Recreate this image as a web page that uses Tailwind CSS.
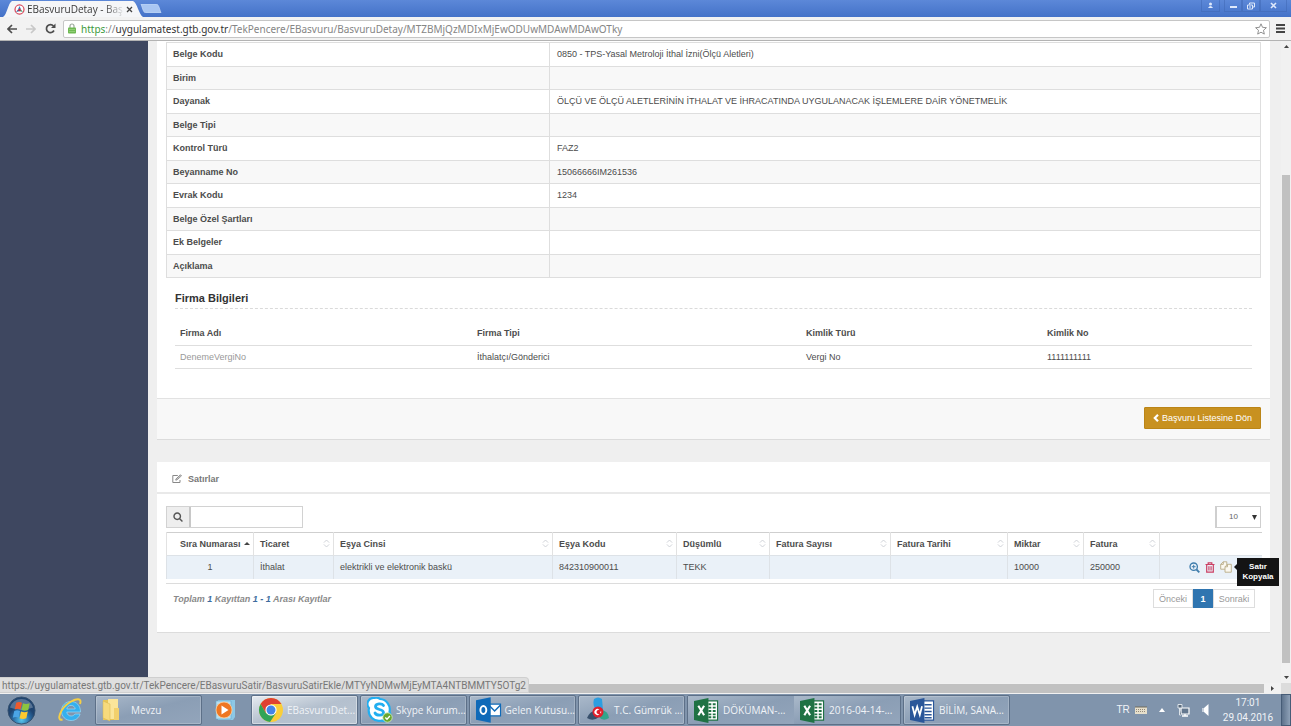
<!DOCTYPE html>
<html lang="tr">
<head>
<meta charset="utf-8">
<title>EBasvuruDetay - Başvuru</title>
<script src="https://cdn.jsdelivr.net/npm/@tailwindcss/browser@4"></script>
</head>
<body class="flex h-screen flex-col overflow-hidden bg-[#efefef] font-['Liberation_Sans',Arial,sans-serif] text-[9px] leading-3 text-[#4c4c4c]">

<svg class="hidden">
  <defs>
    <symbol id="sort" viewBox="0 0 8 10"><path d="M1 4 4 1l3 3M1 6l3 3 3-3" fill="none" stroke="#c9cdd2" stroke-width="1"/></symbol>
    <symbol id="excel" viewBox="0 0 26 26"><path d="M13 3h11.500v20H13z" fill="#fff" stroke="#1f7244" stroke-width="1.200"/><path d="M15 6.500h3M19.500 6.500h3M15 10h3M19.500 10h3M15 13.500h3M19.500 13.500h3M15 17h3M19.500 17h3M15 20h3M19.500 20h3" stroke="#1f7244" stroke-width="2"/><path d="M0 3 15 0v26L0 23z" fill="#1f7244"/><path d="m4.500 8 6 10M10.500 8l-6 10" stroke="#fff" stroke-width="2.200"/></symbol>
  </defs>
</svg>

<!-- Title bar -->
<header class="flex h-[17px] shrink-0 items-end bg-linear-to-b from-[#5c88d8] to-[#4472c8]">
  <div class="relative flex h-4 w-[144px] items-center pl-3.5">
    <svg class="absolute inset-0 h-full w-full" viewBox="0 0 144 16" preserveAspectRatio="none"><path d="M3 16C7 14 8 2 12 0h121c4 1 6 14 10 16z" fill="#f5f6f8"/></svg>
    <svg class="relative size-[11px] shrink-0" viewBox="0 0 22 22"><circle cx="11" cy="11" r="9" fill="#fff" stroke="#d9485a" stroke-width="2.500"/><path d="M11 4 8 11h6z" fill="#2f7fc1"/><path d="m4 16 4-5 4 3z" fill="#2b5b9b"/><path d="m18 16-4-5-4 3z" fill="#3f9c74"/><circle cx="11" cy="12" r="2.500" fill="#d8233a"/></svg>
    <span class="relative ml-0.5 bg-linear-to-r from-[#333] from-80% to-[#e4e6e8] bg-clip-text font-['Open_Sans',sans-serif] text-[10px] leading-4 whitespace-nowrap text-transparent">EBasvuruDetay - Baş</span>
    <button class="relative mr-[11px] ml-auto" aria-label="Sekmeyi kapat"><svg class="size-[7px]" viewBox="0 0 7 7"><path d="m1 1 5 5M6 1 1 6" stroke="#444" stroke-width="1.300"/></svg></button>
  </div>
  <button class="mb-1 -ml-1" aria-label="Yeni sekme"><svg class="h-[9px] w-[22px]" viewBox="0 0 22 9"><path d="M1 0h15q2 0 3 3l2 6H6Q4 9 3 6z" fill="#a9c6f2" stroke="#cfe0fa" stroke-width=".6"/></svg></button>
  <div class="ml-auto flex h-3 self-start text-[#dfe9fb]">
    <button class="flex w-[19px] items-center justify-center border border-t-0 border-[#3d66b2]/50" aria-label="Kullanıcı"><svg class="size-[7px]" viewBox="0 0 7 7" fill="currentColor"><circle cx="3.500" cy="2" r="1.500"/><path d="M1 6q2.500-4 5 0z"/></svg></button>
    <button class="ml-1 flex w-[18px] items-center justify-center border border-t-0 border-[#3d66b2]/50" aria-label="Küçült"><svg class="size-[7px]" viewBox="0 0 7 7"><path d="M0 5h7" stroke="currentColor" stroke-width="2"/></svg></button>
    <button class="flex w-[18px] items-center justify-center border border-t-0 border-[#3d66b2]/50" aria-label="Geri yükle"><svg class="size-2" viewBox="0 0 8 8"><path d="M2.500 2.500V1h5v4H6M.5 3h5v4h-5zM2 5h2" fill="none" stroke="currentColor"/></svg></button>
    <button class="mr-1 flex w-[27px] items-center justify-center border border-t-0 border-[#3d66b2]/50" aria-label="Kapat"><svg class="size-[7px]" viewBox="0 0 7 7"><path d="m1 1 5 5M6 1 1 6" stroke="currentColor" stroke-width="1.600"/></svg></button>
  </div>
</header>

<!-- Address bar -->
<nav class="flex h-6 shrink-0 items-center border-b border-[#b3b3b3] bg-[#f2f2f2] pr-1.5 pl-[7px] text-[#555]">
  <button aria-label="Geri"><svg class="size-[10px]" viewBox="0 0 10 10"><path d="M10 5H1.500M5 1 1 5l4 4" fill="none" stroke="#4d4d4d" stroke-width="1.700"/></svg></button>
  <button class="ml-[9px]" aria-label="İleri"><svg class="size-[10px]" viewBox="0 0 10 10"><path d="M0 5h8.500M5 1l4 4-4 4" fill="none" stroke="#c8c8c8" stroke-width="1.700"/></svg></button>
  <button class="ml-[9px]" aria-label="Yenile"><svg class="size-[11px]" viewBox="0 0 11 11"><path d="M9 7.500A4 4 0 1 1 8.500 3" fill="none" stroke="#4d4d4d" stroke-width="1.700"/><path d="M10.500.5V5H6z" fill="#4d4d4d"/></svg></button>
  <div class="ml-[7px] flex h-[18px] flex-1 items-center rounded-xs border border-[#c6c6c6] bg-white pr-0.5 pl-1">
    <svg class="h-[11px] w-2" viewBox="0 0 8 11"><path d="M2 5V3a2 2 0 0 1 4 0v2" fill="none" stroke="#9aa79a" stroke-width="1.200"/><rect y="4.500" width="8" height="6" rx=".8" fill="#6fba53"/><path d="M1 6.500h6M1 8.500h6" stroke="#a8dc90" stroke-width=".6"/></svg>
    <div class="ml-[5px] flex-1 font-['Noto_Sans',sans-serif] text-[10px] leading-4 whitespace-nowrap text-[#858585]"><span class="text-[#3c9a3c]">https</span>://<span class="text-[#333]">uygulamatest.gtb.gov.tr</span>/TekPencere/EBasvuru/BasvuruDetay/MTZBMjQzMDIxMjEwODUwMDAwMDAwOTky</div>
    <button aria-label="Yer işareti"><svg class="size-3" viewBox="0 0 12 12"><path d="m6 .8 1.500 3.500 3.900.4-2.900 2.600.8 3.800L6 9.200l-3.300 1.900.8-3.800L.6 4.700l3.900-.4z" fill="#fff" stroke="#777" stroke-width=".8"/></svg></button>
  </div>
  <button class="ml-1.5" aria-label="Menü"><svg class="size-[9px]" viewBox="0 0 9 9"><path d="M0 1h9M0 4.500h9M0 8h9" stroke="#444" stroke-width="1.800"/></svg></button>
</nav>

<!-- Page viewport -->
<div class="relative flex min-h-0 flex-1">
  <aside class="mb-1.5 w-[148px] shrink-0 bg-[#3e4760]"></aside>
  <main class="min-w-0 flex-1 px-[9px] pr-[11px]">
    <section class="border-b border-[#dcdcdc] bg-white">
      <div class="px-[9px] pt-px">
        <table class="h-[236px] w-full table-fixed border-collapse border border-[#dedede] text-left [&_td]:border [&_td]:border-[#dedede] [&_td]:px-[7px] [&_th]:border [&_th]:border-[#dedede] [&_th]:px-1.5 [&_tr:nth-child(even)]:bg-[#f8f8f8]">
          <colgroup><col class="w-[35%]"><col></colgroup>
          <tbody>
            <tr><th>Belge Kodu</th><td>0850 - TPS-Yasal Metroloji İthal İzni(Ölçü Aletleri)</td></tr>
            <tr><th>Birim</th><td></td></tr>
            <tr><th>Dayanak</th><td>ÖLÇÜ VE ÖLÇÜ ALETLERİNİN İTHALAT VE İHRACATINDA UYGULANACAK İŞLEMLERE DAİR YÖNETMELİK</td></tr>
            <tr><th>Belge Tipi</th><td></td></tr>
            <tr><th>Kontrol Türü</th><td>FAZ2</td></tr>
            <tr><th>Beyanname No</th><td>15066666IM261536</td></tr>
            <tr><th>Evrak Kodu</th><td>1234</td></tr>
            <tr><th>Belge Özel Şartları</th><td></td></tr>
            <tr><th>Ek Belgeler</th><td></td></tr>
            <tr><th>Açıklama</th><td></td></tr>
          </tbody>
        </table>
      </div>
      <div class="px-[18px] pt-3.5 pb-[29px]">
        <h2 class="border-b border-dashed border-[#dadada] pb-[3px] text-[11px] leading-[13px] font-bold text-[#333]">Firma Bilgileri</h2>
        <table class="mt-3 w-full table-fixed border-collapse text-left [&_td]:px-[5px] [&_th]:px-[5px] [&_tr]:border-b [&_tr]:border-[#dedede]">
          <colgroup><col class="w-[297px]"><col class="w-[329px]"><col class="w-[241px]"><col class="w-[210px]"></colgroup>
          <thead><tr class="h-6"><th>Firma Adı</th><th>Firma Tipi</th><th>Kimlik Türü</th><th>Kimlik No</th></tr></thead>
          <tbody><tr class="h-[23px]"><td class="text-[#999]">DenemeVergiNo</td><td>İthalatçı/Gönderici</td><td>Vergi No</td><td>1111111111</td></tr></tbody>
        </table>
      </div>
      <footer class="flex h-[41px] items-center justify-end border-t border-[#e2e2e2] bg-[#f8f8f8] pr-[9px] pb-0.5">
        <button class="flex h-[22px] items-center gap-[3px] rounded-[1px] border border-[#bb8517] bg-[#c89120] px-2 text-white"><svg class="h-2 w-1.5" viewBox="0 0 6 8"><path d="M5 .8 1.800 4 5 7.200" fill="none" stroke="#fff" stroke-width="2.200"/></svg>Başvuru Listesine Dön</button>
      </footer>
    </section>

    <section class="mt-[22px] border-b border-[#dcdcdc] bg-white">
      <h2 class="flex h-8 items-center gap-1.5 border-b-2 border-[#e9e9e9] pt-1 pl-[15px] font-bold text-[#777]">
        <svg class="size-[10px]" viewBox="0 0 10 10" fill="none" stroke="#888"><path d="M8 6v2.500H.8V1.500h5"/><path d="M4 5.500 8.500 1M3.800 6.200l.3-1.400 4.400-4 1 1-4.400 4z" stroke-width=".9"/></svg>Satırlar
      </h2>
      <div class="px-[9px] pt-3 pb-6">
        <div class="flex justify-between">
          <label class="flex h-[22px] w-[137px] border border-[#d2d2d2]">
            <span class="flex w-6 shrink-0 items-center justify-center border-r-2 border-[#c8c8c8] bg-[#eee]"><svg class="size-[10px]" viewBox="0 0 9 9" fill="none" stroke="#555" stroke-width="1.300"><circle cx="3.800" cy="3.800" r="2.900"/><path d="m6 6 2.500 2.500"/></svg></span>
            <input type="search" aria-label="Ara" class="min-w-0 flex-1 bg-white px-1 outline-none">
          </label>
          <div class="relative">
            <select aria-label="Sayfa boyutu" class="h-[22px] w-[46px] appearance-none border border-l-2 border-[#cfcfcf] bg-white pl-3 text-[8px] text-[#666]"><option>10</option></select>
            <svg class="pointer-events-none absolute top-[9px] right-1 h-[5px] w-[5px]" viewBox="0 0 5 5"><path d="M0 0h5L2.500 5z" fill="#333"/></svg>
          </div>
        </div>
        <div class="mt-1 border-b border-[#dcdcdc] pb-1">
          <table class="w-full table-fixed border-collapse text-left [&_td]:border-r [&_td]:border-[#dde2e7] [&_td]:px-1.5 [&_td:last-child]:border-r-0 [&_th]:border-r [&_th]:border-[#e2e2e2] [&_th]:px-1.5 [&_th:last-child]:border-r-0">
            <colgroup><col class="w-[87px]"><col class="w-[80px]"><col class="w-[219px]"><col class="w-[124px]"><col class="w-[93px]"><col class="w-[121px]"><col class="w-[117px]"><col class="w-[76px]"><col class="w-[76px]"><col class="w-[102px]"></colgroup>
            <thead>
              <tr class="h-[23px] border-t border-[#cfcfcf] whitespace-nowrap">
                <th class="border-l"><div class="-mr-[3px] flex items-center justify-between pl-[7px]">Sıra Numarası<svg class="h-[3px] w-1.5" viewBox="0 0 6 3"><path d="M0 3h6L3 0z" fill="#444"/></svg></div></th>
                <th><div class="-mr-[3px] flex items-center justify-between">Ticaret<svg class="h-[9px] w-[7px]"><use href="#sort"/></svg></div></th>
                <th><div class="-mr-[3px] flex items-center justify-between">Eşya Cinsi<svg class="h-[9px] w-[7px]"><use href="#sort"/></svg></div></th>
                <th><div class="-mr-[3px] flex items-center justify-between">Eşya Kodu<svg class="h-[9px] w-[7px]"><use href="#sort"/></svg></div></th>
                <th><div class="-mr-[3px] flex items-center justify-between">Düşümlü<svg class="h-[9px] w-[7px]"><use href="#sort"/></svg></div></th>
                <th><div class="-mr-[3px] flex items-center justify-between">Fatura Sayısı<svg class="h-[9px] w-[7px]"><use href="#sort"/></svg></div></th>
                <th><div class="-mr-[3px] flex items-center justify-between">Fatura Tarihi<svg class="h-[9px] w-[7px]"><use href="#sort"/></svg></div></th>
                <th><div class="-mr-[3px] flex items-center justify-between">Miktar<svg class="h-[9px] w-[7px]"><use href="#sort"/></svg></div></th>
                <th><div class="-mr-[3px] flex items-center justify-between">Fatura<svg class="h-[9px] w-[7px]"><use href="#sort"/></svg></div></th>
                <th></th>
              </tr>
            </thead>
            <tbody>
              <tr class="h-6 border-t border-[#dde2e7] bg-[#eaf1f8]">
                <td class="border-l text-center">1</td><td>İthalat</td><td>elektrikli ve elektronik baskü</td><td>842310900011</td><td>TEKK</td><td></td><td></td><td>10000</td><td>250000</td>
                <td>
                  <div class="relative flex items-center gap-[5px] pl-[23px]">
                    <a href="#" aria-label="Görüntüle"><svg class="size-[11px]" viewBox="0 0 11 11" fill="none" stroke="#3f7dac" stroke-width="1.300"><circle cx="4.700" cy="4.700" r="3.700"/><path d="M7.500 7.500 10.300 10.300" stroke-width="1.800"/><path d="M2.800 4.700h3.800M4.700 2.800v3.800" stroke-width="1"/></svg></a>
                    <a href="#" aria-label="Sil"><svg class="h-[11px] w-[10px]" viewBox="0 0 10 11" fill="none" stroke="#cb3f63"><path d="M.5 2.500h9M3.200 2.300V.8h3.600v1.500M1.700 2.500v7.700h6.600V2.500" stroke-width="1.200"/><path d="M3.700 4.200v4.300M5 4.200v4.300M6.300 4.200v4.300" stroke-width=".8"/></svg></a>
                    <a href="#" aria-label="Kopyala"><svg class="size-3" viewBox="0 0 12 12" fill="#fbf8f0" stroke="#b9ab86" stroke-width=".9"><path d="M3.300.8h3.500v7.400H.7V3.400zM3.300.8v2.600H.7"/><path d="M7.500 3.300h3.800v7.900H5V5.800zM7.500 3.300v2.500H5"/></svg></a>
                    <div role="tooltip" class="absolute -top-[3px] left-[71px] w-[42px] bg-[#141414] px-1 py-1 text-center text-[8px] leading-[10px] font-bold text-white"><svg class="absolute top-1.5 -left-[3px] h-1.5 w-[3px]" viewBox="0 0 3 6"><path d="M3 0v6L0 3z" fill="#141414"/></svg>Satır<br>Kopyala</div>
                  </div>
                </td>
              </tr>
            </tbody>
          </table>
        </div>
        <div class="flex items-start justify-between pt-[5px] pr-1.5 pl-[7px]">
          <p class="pt-1 font-bold text-[#8a8a8a] italic">Toplam <span class="text-[#3d6c9e]">1</span> Kayıttan <span class="text-[#3d6c9e]">1 - 1</span> Arası Kayıtlar</p>
          <div class="flex h-[19px] text-[#999]">
            <button class="w-10 border border-[#ddd]">Önceki</button>
            <button class="w-5 bg-[#2f75b0] font-bold text-white">1</button>
            <button class="w-[42px] border border-[#ddd]">Sonraki</button>
          </div>
        </div>
      </div>
    </section>
  </main>

  <!-- Vertical scrollbar -->
  <div class="flex w-[10px] shrink-0 flex-col items-center bg-[#f1f1f1] py-1">
    <svg class="h-[3px] w-[5px]" viewBox="0 0 5 3"><path d="M0 3h5L2.500 0z" fill="#444"/></svg>
    <div class="mt-[127px] mb-[13px] w-2 flex-1 bg-[#c1c1c1]"></div>
    <svg class="h-[3px] w-[5px]" viewBox="0 0 5 3"><path d="M0 0h5L2.500 3z" fill="#444"/></svg>
  </div>

  <div class="absolute -bottom-[10px] left-0 z-10 h-4 rounded-tr-sm border border-l-0 border-[#cfcfcf] bg-[#dfdfdf] px-0.5 font-['Roboto',sans-serif] text-[10px] leading-[15px] whitespace-nowrap text-[#777]">https://uygulamatest.gtb.gov.tr/TekPencere/EBasvuruSatir/BasvuruSatirEkle/MTYyNDMwMjEyMTA4NTBMMTY5OTg2</div>
</div>

<!-- Horizontal scrollbar -->
<div class="flex h-[11px] shrink-0 items-center bg-[#f1f1f1]">
  <div class="ml-4 h-[9px] flex-1 bg-[#c1c1c1]"></div>
  <svg class="mx-[7px] h-[5px] w-[3px]" viewBox="0 0 3 5"><path d="M0 0v5l3-2.500z" fill="#444"/></svg>
  <div class="h-full w-[10px] bg-[#dcdcdc]"></div>
</div>

<!-- Taskbar -->
<footer class="flex h-8 shrink-0 items-center bg-[#8094ac] font-['Open_Sans',sans-serif] text-[10px] whitespace-nowrap text-[#f0f3f7]">
  <button class="ml-[7px]" aria-label="Başlat"><svg class="size-[29px]" viewBox="0 0 30 30"><defs><radialGradient id="orb" cy=".85"><stop stop-color="#58c7ee"/><stop offset=".6" stop-color="#2a6da5"/><stop offset="1" stop-color="#1f4470"/></radialGradient></defs><circle cx="15" cy="15" r="14" fill="url(#orb)" stroke="#35516f"/><path d="M3 12a12.500 12.500 0 0 1 24 0Q15 17 3 12z" fill="#fff" opacity=".25"/><path d="M9.500 7q3-1.500 6 0L14 14q-3-1.500-6 0z" fill="#ee5a2c"/><path d="M16.500 7.500q3 1.500 7 0L22 14.500q-3.500 1.500-7 0z" fill="#8cc43f"/><path d="M7.500 15.500q3-1.500 6 0L12 22.500q-3-1.500-6 0z" fill="#4ba5e6"/><path d="M14.500 16q3.500 1.500 7 0L20 23q-3.500 1.500-7 0z" fill="#fdc92e"/></svg></button>
  <button class="ml-[21px]" aria-label="Internet Explorer"><svg class="size-[26px]" viewBox="0 0 26 26"><path d="M14 4.500c5.500 0 9.500 4 9.500 10.500H9.800c.3 2.800 2.200 4 4.400 4 1.700 0 3-.8 3.600-2h5.300c-1.300 4-4.600 6.500-9 6.500-5.600 0-9.600-4-9.600-9.500s4-9.500 9.500-9.500zM9.800 12h8.400c-.3-2.200-1.900-3.600-4.100-3.600S10.200 9.800 9.800 12z" fill="#35b0ee" stroke="#9adcfb" stroke-width=".7"/><path d="M5.500 22.500C-1 24.500 3 11.500 12.500 5.500 19 1.500 25.500.5 23 7" fill="none" stroke="#f6cf45" stroke-width="2"/></svg></button>
  <button class="ml-3 flex h-[30px] w-[107px] items-center rounded-xs border border-[#5d7088] bg-linear-to-br from-[#aab9ca] via-[#8b9eb5] to-[#93a5bb] pl-1.5 ring-1 ring-white/20 ring-inset"><svg class="h-6 w-[18px]" viewBox="0 0 18 24"><path d="M1 2h9l2 2v18H1z" fill="#e9c657"/><path d="M6 1h10v20H6z" fill="#fae59a"/><path d="m1 3 7 3v17l-7-3z" fill="#f7da7c" stroke="#d7b54c" stroke-width=".5"/><path d="M12 10h5v12h-5z" fill="#f2d06c"/></svg><span class="ml-[11px]">Mevzu</span></button>
  <button class="ml-3" aria-label="Media Player"><svg class="size-[22px]" viewBox="0 0 22 22"><path d="M4 1h17v17l-2 3H4z" fill="#8cc8e6"/><path d="M2 2h15v18H2z" fill="#b6def0" stroke="#67a7cc" stroke-width=".6"/><circle cx="10" cy="11" r="8" fill="#ee7622" stroke="#fbd0a0" stroke-width=".8"/><path d="M7.500 6.500v9l7-4.500z" fill="#fff"/></svg></button>
  <button class="ml-[15px] flex h-[30px] w-[107px] items-center rounded-xs border border-[#5d7088] bg-linear-to-br from-[#e6ebf0] via-[#b4c0ce] to-[#b9c5d2] pl-1.5 ring-1 ring-white/40 ring-inset"><svg class="size-[26px]" viewBox="0 0 26 26"><circle cx="13" cy="13" r="12" fill="#f9ce3a"/><path d="M2.600 7A12 12 0 0 1 23.400 7H13l-5.200 9z" fill="#df4132"/><path d="M2.600 7A12 12 0 0 0 12 25l6-9-5 2.500-5.200-2.500z" fill="#32a456"/><circle cx="13" cy="13" r="5.600" fill="#fff"/><circle cx="13" cy="13" r="4.500" fill="#4384e8"/></svg><span class="ml-[3px]">EBasvuruDet...</span></button>
  <button class="ml-0.5 flex h-[30px] w-[107px] items-center rounded-xs border border-[#5d7088] bg-linear-to-br from-[#aab9ca] via-[#8b9eb5] to-[#93a5bb] pl-1.5 ring-1 ring-white/20 ring-inset"><svg class="size-[26px]" viewBox="0 0 26 26"><path d="M7 1a6 6 0 0 1 6 1 10.500 10.500 0 0 1 9.500 13A6 6 0 0 1 15 23.500 10.500 10.500 0 0 1 2 11 6 6 0 0 1 7 1z" fill="#fff" stroke="#22aef0" stroke-width="2.200"/><path d="M16.500 8.500C15 6 8.500 6.300 8.500 9.500c0 4 8 2 8 6 0 3.500-7 3.500-8.500.5" fill="none" stroke="#22aef0" stroke-width="2.800" stroke-linecap="round"/><circle cx="20.500" cy="20.500" r="4.700" fill="#69a72d" stroke="#d8efc0" stroke-width=".8"/><path d="m18.300 20.500 1.700 1.800 2.900-3.300" fill="none" stroke="#fff" stroke-width="1.300"/></svg><span class="ml-[3px]">Skype Kurum...</span></button>
  <button class="ml-0.5 flex h-[30px] w-[107px] items-center rounded-xs border border-[#5d7088] bg-linear-to-br from-[#aab9ca] via-[#8b9eb5] to-[#93a5bb] pl-1.5 ring-1 ring-white/20 ring-inset"><svg class="size-[26px]" viewBox="0 0 26 26"><path d="M13 7h12v12H13z" fill="#fff" stroke="#0f6ab8" stroke-width="1.200"/><path d="m13 8 6 6 6-6" fill="none" stroke="#0f6ab8" stroke-width="1.500"/><path d="M0 3 15 0v26L0 23z" fill="#0f6ab8"/><ellipse cx="7.500" cy="13" rx="3" ry="4" fill="none" stroke="#fff" stroke-width="2"/></svg><span class="ml-[3px]">Gelen Kutusu...</span></button>
  <button class="ml-0.5 flex h-[30px] w-[107px] items-center rounded-xs border border-[#5d7088] bg-linear-to-br from-[#aab9ca] via-[#8b9eb5] to-[#93a5bb] pl-1.5 ring-1 ring-white/20 ring-inset"><svg class="size-[26px]" viewBox="0 0 26 26"><path d="M9 2q4-3 8 0l1 11-6 1q-5-5-3-12z" fill="#2d9ee0"/><path d="M2 21q3-7 8-7l4 6q-6 5-12 1z" fill="#38506c"/><path d="M24 21q-1-7-7-8l-3 7q4 5 10 1z" fill="#32a58c"/><circle cx="13" cy="15" r="5.500" fill="#e2202c"/><path d="M14.500 12.800a3 3 0 1 0 0 4.400 2.300 2.300 0 1 1 0-4.400z" fill="#fff"/><path d="m15.200 14 .5.800h1l-.7.700.3 1-1-.5z" fill="#fff"/></svg><span class="ml-[3px]">T.C. Gümrük ...</span></button>
  <div class="ml-0.5 flex h-[30px] w-[214px] rounded-xs border border-[#5d7088] ring-1 ring-white/20 ring-inset">
    <button class="flex flex-1 items-center bg-linear-to-br from-[#aab9ca] via-[#8b9eb5] to-[#93a5bb] pl-1.5"><svg class="size-[25px]"><use href="#excel"/></svg><span class="ml-1">DÖKÜMAN-...</span></button>
    <button class="flex flex-1 items-center bg-linear-to-br from-[#aab9ca] via-[#8b9eb5] to-[#93a5bb] pl-1.5"><svg class="size-[25px]"><use href="#excel"/></svg><span class="ml-1">2016-04-14-...</span></button>
  </div>
  <button class="ml-0.5 flex h-[30px] w-[107px] items-center rounded-xs border border-[#5d7088] bg-linear-to-br from-[#aab9ca] via-[#8b9eb5] to-[#93a5bb] pl-1.5 ring-1 ring-white/20 ring-inset"><svg class="size-[25px]" viewBox="0 0 26 26"><path d="M13 3h11.500v20H13z" fill="#fff" stroke="#2a5699" stroke-width="1.200"/><path d="M15 7h7.500M15 10.500h7.500M15 14h7.500M15 17.500h7.500M15 20.500h7.500" stroke="#2a5699" stroke-width="1.500"/><path d="M0 3 15 0v26L0 23z" fill="#2a5699"/><path d="m2.500 8.500 2.300 9 2.700-8.500 2.700 8.500 2.300-9" fill="none" stroke="#fff" stroke-width="1.800"/></svg><span class="ml-1">BİLİM, SANA...</span></button>
  <div class="ml-auto flex h-full items-center">
    <span class="font-['Liberation_Sans',sans-serif]">TR</span>
    <svg class="ml-[5px] h-2 w-3" viewBox="0 0 12 8"><rect y="1" width="12" height="7" fill="#e6dfcb"/><path d="M0 1h12" stroke="#6f6a5c"/><path d="M1 3.500h10M1 5.500h10" stroke="#93897a" stroke-dasharray="1 1"/></svg>
    <svg class="ml-3 h-1 w-1.5" viewBox="0 0 6 4"><path d="M0 4h6L3 0z" fill="#fff"/></svg>
    <svg class="ml-3 size-[13px]" viewBox="0 0 13 13"><path d="M4 4h8v6H4z" fill="#64788f" stroke="#fff" stroke-width="1.200"/><path d="M8 10v2M5 12h6" stroke="#fff" stroke-width="1.300"/><path d="M1 .5h4v3.500H1zM2.500 4v7H4" fill="#5a6a7c" stroke="#e8edf2" stroke-width=".9"/></svg>
    <svg class="ml-3 h-3 w-[7px]" viewBox="0 0 7 12"><path d="M0 4h2l4.500-4v12L2 8H0z" fill="#fff"/><path d="M0 4h2v4H0z" fill="#c6cfda"/></svg>
    <div class="mr-2 ml-3.5 text-center font-['Roboto',sans-serif] leading-[15px]">17:01<br>29.04.2016</div>
    <button class="h-full w-[10px] border border-[#465c77] bg-linear-to-r from-[#5d728c] to-[#8ea1b7]" aria-label="Masaüstünü göster"></button>
  </div>
</footer>
</body>
</html>
